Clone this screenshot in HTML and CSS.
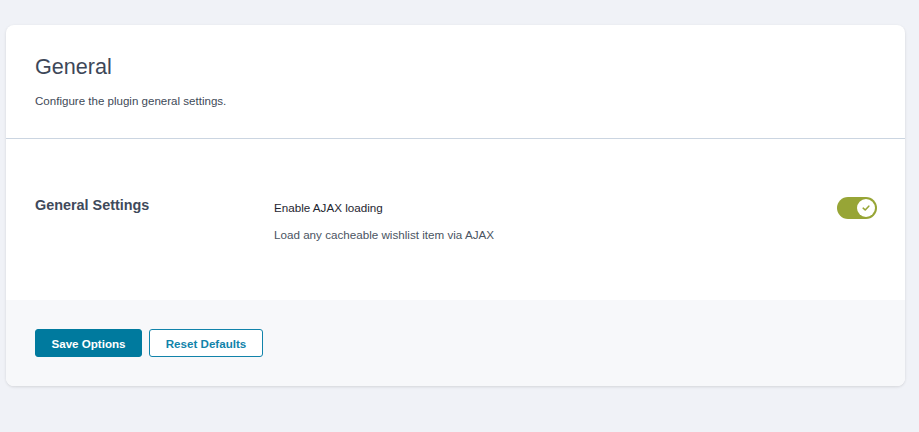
FILE: index.html
```html
<!DOCTYPE html>
<html>
<head>
<meta charset="utf-8">
<link rel="stylesheet" href="styles.css">
</head>
<body>
<div class="card">
  <div class="card-header">
    <h1 class="title">General</h1>
    <p class="subtitle">Configure the plugin general settings.</p>
  </div>
  <div class="section">
    <h2 class="section-title">General Settings</h2>
    <div class="field">
      <div class="field-text">
        <div class="field-label">Enable AJAX loading</div>
        <div class="field-desc">Load any cacheable wishlist item via AJAX</div>
      </div>
      <div class="toggle">
        <span class="knob">
          <svg width="10" height="10" viewBox="0 0 10 10"><path d="M2.2 5.2 L4.2 7 L7.8 3.2" fill="none" stroke="#97a536" stroke-width="1.6" stroke-linecap="round" stroke-linejoin="round"/></svg>
        </span>
      </div>
    </div>
  </div>
  <div class="card-footer">
    <button class="btn btn-primary">Save Options</button>
    <button class="btn btn-secondary">Reset Defaults</button>
  </div>
</div>
</body>
</html>
```

FILE: styles.css
```css
html, body {
  margin: 0;
  padding: 0;
  background: #f0f2f7;
  font-family: "Liberation Sans", Arial, sans-serif;
}
body {
  padding: 25px 14px 46px 6px;
}
.card {
  background: #fff;
  border-radius: 8px;
  box-shadow: 0 1px 3px rgba(0, 0, 0, 0.12);
  overflow: hidden;
}
.card-header {
  padding: 30px 29px 30px;
  border-bottom: 1px solid #cbd5e1;
}
.title {
  margin: 0;
  font-size: 21.6px;
  font-weight: 400;
  color: #3d4758;
  line-height: 24px;
}
.subtitle {
  margin: 15px 0 0;
  font-size: 11.55px;
  color: #404957;
  line-height: 14px;
}
.section {
  display: flex;
  padding: 57px 28px 58px 29px;
}
.section-title {
  margin: 0;
  width: 239px;
  font-size: 14.4px;
  font-weight: 700;
  color: #3f4a5b;
  line-height: 18px;
}
.field {
  flex: 1;
  display: flex;
  justify-content: space-between;
  align-items: flex-start;
}
.field-label {
  font-size: 11.65px;
  color: #1e2530;
  line-height: 14px;
  margin-top: 5px;
}
.field-desc {
  font-size: 11.65px;
  color: #4a5462;
  line-height: 14px;
  margin-top: 13px;
}
.toggle {
  width: 40px;
  height: 22px;
  margin-top: 1px;
  border-radius: 11px;
  background: #97a536;
  display: flex;
  align-items: center;
  justify-content: flex-end;
  padding: 0 2px;
  box-sizing: border-box;
}
.knob {
  width: 18px;
  height: 18px;
  border-radius: 50%;
  background: #fff;
  display: flex;
  align-items: center;
  justify-content: center;
}
.card-footer {
  background: #f7f8fa;
  padding: 29px 29px 29px;
  display: flex;
  gap: 7px;
}
.btn {
  height: 28px;
  border-radius: 3px;
  font-family: "Liberation Sans", Arial, sans-serif;
  font-size: 11.6px;
  font-weight: 700;
  padding: 0;
  cursor: pointer;
}
.btn-primary {
  width: 107px;
  background: #007a9e;
  color: #fff;
  border: 1px solid #007a9e;
}
.btn-secondary {
  width: 114px;
  background: #fff;
  color: #1183aa;
  border: 1px solid #1183aa;
}
```
